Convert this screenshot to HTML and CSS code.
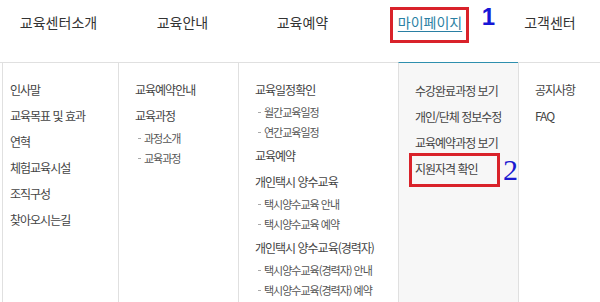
FILE: index.html
```html
<!DOCTYPE html>
<html lang="ko">
<head>
<meta charset="utf-8">
<title>GNB</title>
<link rel="stylesheet" href="styles.css">
</head>
<body>
<div class="gnb">
  <nav class="top">
    <div class="top-item"><a>교육센터소개</a></div>
    <div class="top-item"><a>교육안내</a></div>
    <div class="top-item"><a>교육예약</a></div>
    <div class="top-item"><a class="active mark-top">마이페이지<span class="num num1">1</span></a></div>
    <div class="top-item"><a>고객센터</a></div>
  </nav>
  <div class="panel">
    <ul class="col c1">
      <li><a>인사말</a></li>
      <li><a>교육목표 및 효과</a></li>
      <li><a>연혁</a></li>
      <li><a>체험교육시설</a></li>
      <li><a>조직구성</a></li>
      <li><a>찾아오시는길</a></li>
    </ul>
    <ul class="col c2">
      <li><a>교육예약안내</a></li>
      <li><a>교육과정</a>
        <ul class="sub">
          <li>과정소개</li>
          <li>교육과정</li>
        </ul>
      </li>
    </ul>
    <ul class="col c3">
      <li><a>교육일정확인</a>
        <ul class="sub">
          <li>월간교육일정</li>
          <li>연간교육일정</li>
        </ul>
      </li>
      <li><a>교육예약</a></li>
      <li><a>개인택시 양수교육</a>
        <ul class="sub">
          <li>택시양수교육 안내</li>
          <li>택시양수교육 예약</li>
        </ul>
      </li>
      <li><a>개인택시 양수교육(경력자)</a>
        <ul class="sub">
          <li>택시양수교육(경력자) 안내</li>
          <li>택시양수교육(경력자) 예약</li>
        </ul>
      </li>
    </ul>
    <ul class="col c4">
      <li><a>수강완료과정 보기</a></li>
      <li><a>개인/단체 정보수정</a></li>
      <li><a>교육예약과정 보기</a></li>
      <li><a class="mark-sub">지원자격 확인<span class="num num2">2</span></a></li>
    </ul>
    <ul class="col c5">
      <li><a>공지사항</a></li>
      <li><a>FAQ</a></li>
    </ul>
  </div>
</div>
</body>
</html>
```

FILE: styles.css
```css
* { box-sizing: border-box; }
html, body { margin: 0; padding: 0; background: #fff; }
body {
  font-family: "Noto Sans CJK KR", "Noto Sans", sans-serif;
  color: #333;
  overflow: hidden;
}
ul { list-style: none; margin: 0; padding: 0; }
a { color: inherit; text-decoration: none; }

.top {
  display: grid;
  grid-template-columns: 117px 131px 109px 146px 94px;
  height: 62px;
  padding-top: 12px;
}
.top-item {
  display: flex;
  justify-content: center;
  align-items: flex-start;
}
.top-item a {
  display: inline-block;
  font-size: 14px;
  line-height: 20px;
  color: #333;
  position: relative;
}
.top-item a.active {
  color: #2a7fa3;
  text-decoration: underline;
  text-underline-offset: 3px;
}
.mark-top::before {
  content: "";
  position: absolute;
  left: -8px;
  right: -7px;
  top: -5px;
  bottom: -11px;
  border: 3px solid #d9222a;
}
.num {
  position: absolute;
  color: #1616d6;
  line-height: 1;
  text-decoration: none;
  display: inline-block;
}
.num1 {
  font-family: "Liberation Sans", Arial, sans-serif;
  font-weight: bold;
  font-size: 24px;
  left: 84px;
  top: -7px;
}

.panel {
  display: flex;
  border-top: 1px solid #e0e0e0;
  height: 240px;
}
.col {
  border-left: 1px solid #e0e0e0;
  padding: 14px 0 0 16px;
  font-size: 12px;
  letter-spacing: -1px;
  color: #444;
}
.col > li { line-height: 26px; }
.c1 { width: 116px; margin-left: 2px; padding-left: 7px; }
.c2 { width: 120px; }
.c3 { width: 160px; }
.c4 {
  width: 120px;
  background: #f7f7f7;
  margin-top: -1px;
  border-top: 1px solid #2e8fae;
  padding-top: 15px;
}
.c5 { flex: 1; }

.sub { margin: -1px 0 1px; }
.sub li {
  position: relative;
  font-size: 11px;
  line-height: 20px;
  padding-left: 9px;
  color: #555;
}
.sub li::before {
  content: "";
  position: absolute;
  left: 3px;
  top: 10px;
  width: 3px;
  height: 1px;
  background: #aaa;
}

.mark-sub {
  position: relative;
  display: inline-block;
}
.mark-sub::before {
  content: "";
  position: absolute;
  left: -6px;
  width: 85px;
  top: -3px;
  bottom: -5px;
  border: 3px solid #d9222a;
}
.num2 {
  font-family: "Liberation Serif", "Times New Roman", serif;
  font-size: 30px;
  letter-spacing: 0;
  left: 88px;
  top: -1px;
  color: #1a1ad0;
}
```
